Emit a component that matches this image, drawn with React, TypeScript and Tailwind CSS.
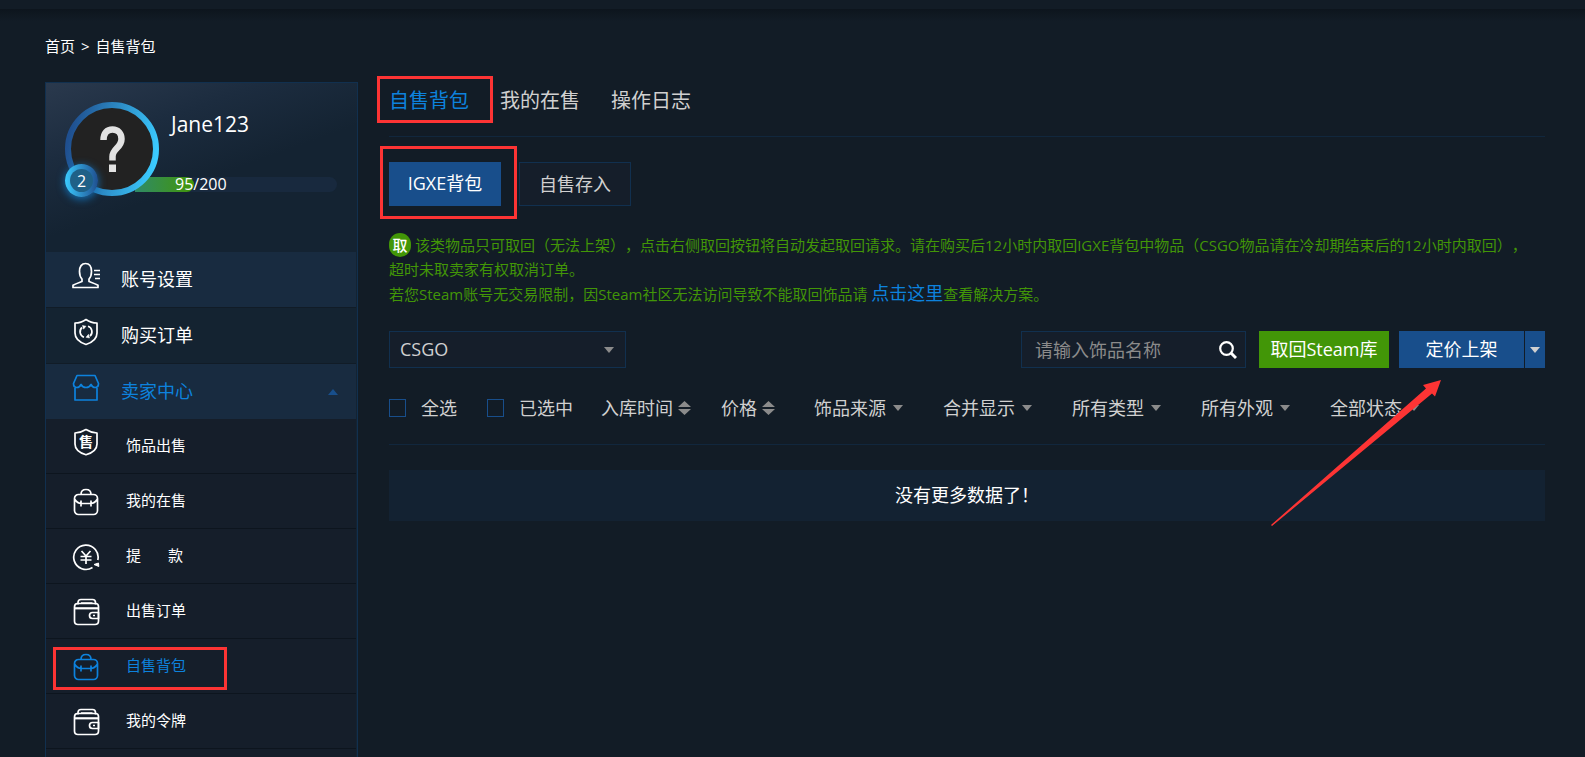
import React from "react";

const sideMenu = [
  { id: 1, name: "账号设置", icon: "user", box: "h-14 border-b bg-[#182b40]" },
  { id: 2, name: "购买订单", icon: "order", box: "h-14 border-b bg-[#142331]" },
  { id: 3, name: "卖家中心", icon: "shop", box: "h-[55px] bg-[#182b40]", active: true },
];

const sellerMenu = [
  { id: 1, name: "饰品出售", icon: "sell" },
  { id: 2, name: "我的在售", icon: "bag" },
  { id: 3, name: "提款", icon: "yen", spread: true },
  { id: 4, name: "出售订单", icon: "wallet" },
  { id: 5, name: "自售背包", icon: "bag", active: true },
  { id: 6, name: "我的令牌", icon: "wallet" },
];

const filters = ["饰品来源", "合并显示", "所有类型", "所有外观", "全部状态"];

const MenuIcon = ({ name }: { name: string }) => (
  <svg
    className="h-7 w-7 shrink-0"
    viewBox="0 0 28 28"
    fill="none"
    stroke="currentColor"
    strokeWidth="1.7"
    strokeLinejoin="round"
    aria-hidden="true"
  >
    {name === "user" && (
      <path d="M1 25.500v-2.200c3-1.800 6.400-2.800 9-3.800v-2.500C8.300 15.300 7.500 12.500 7.500 9.500 7.500 4.500 9.700 1.500 13.500 1.500s6 3 6 8c0 3-.8 5.800-2.500 7.500v2.500c2.600 1 6 2 9 3.800v2.200zM22 8.500h6M22 12.500h6M23 16.500h5" />
    )}
    {name === "order" && (
      <>
        <path d="M14 1.500c3.500 2.500 7 3.500 11 3.500v10c0 6-5 9.500-11 11.500C8 24.500 3 21 3 15V5c4 0 7.500-1 11-3.500z" />
        <path d="M12 19.200a5.700 5.700 0 0 1-2-9.700M16 8.300a5.700 5.700 0 0 1 2 9.700" />
        <path d="M10.500 7.500l3.500.7-2.500 3zM17.500 20l-3.500-.7 2.500-3z" fill="currentColor" strokeWidth="0.5" />
      </>
    )}
    {name === "shop" && (
      <path d="M5 1.500h18l3.500 8c0 3-1.500 4-3.500 4s-3-1-4-3c-1 2-2.500 3-5 3s-4-1-5-3c-1 2-2 3-4 3s-3.500-1-3.500-4zM3 14v12h22V14" />
    )}
    {name === "sell" && (
      <>
        <path d="M14 1.500c3.500 2.300 7 3.200 11 3.500v11c0 5.500-5 9-11 10.800C8 25 3 21.500 3 16V5c4-.3 7.500-1.200 11-3.500z" />
        <text
          x="14"
          y="19"
          fontSize="14"
          fontWeight="700"
          textAnchor="middle"
          fill="currentColor"
          stroke="none"
        >
          售
        </text>
      </>
    )}
    {name === "bag" && (
      <path d="M9 6.500c0-3 1.500-5 5-5s5 2 5 5M6.500 6.500h15A4 4 0 0 1 25.500 10.500v12a4 4 0 0 1-4 4h-15a4 4 0 0 1-4-4v-12a4 4 0 0 1 4-4zM2.500 11c2 3 4 4.500 6.500 4.500h10c2.500 0 4.500-1.500 6.500-4.500M9 12.500v6M19 12.500v6" />
    )}
    {name === "yen" && (
      <>
        <path d="M20.500 24.500A12.200 12.200 0 1 1 25.800 17" />
        <path d="M22 21.500l4.500-1.500.3 3.500z" fill="currentColor" strokeWidth="1" />
        <path d="M9.500 8l4.500 5 4.500-5M8.500 13.500h11M8.500 17h11M14 13v8" />
      </>
    )}
    {name === "wallet" && (
      <>
        <path d="M5.500 5.500h18c2 0 3 1 3 3V23c0 2.500-1.500 3.500-3.500 3.500H6c-2.500 0-3.500-1.500-3.500-3.500V9c0-2 1-3.500 3-3.500z" />
        <path d="M3 10.300h23" strokeWidth="2.200" />
        <path d="M6 6.500V4.500c0-2 1-3 3-3h11.500c2 0 3 1 3 3v2M9 5h11.500M26.500 14.500h-6a3 3 0 0 0 0 6h6zM21 17.500h2" />
      </>
    )}
  </svg>
);

const Caret = ({ className = "" }: { className?: string }) => (
  <svg
    className={`h-[6px] w-[10px] shrink-0 ${className}`}
    viewBox="0 0 10 6"
    fill="currentColor"
    aria-hidden="true"
  >
    <path d="M0 0h10L5 6z" />
  </svg>
);

const SortIcon = () => (
  <svg
    className="h-[14px] w-[13px]"
    viewBox="0 0 13 14"
    fill="#8b8b8b"
    aria-hidden="true"
  >
    <path d="M0 6L6.500 0 13 6zM0 8h13L6.500 14z" />
  </svg>
);

const Profile = () => (
  <div className="flex h-[169px] bg-[linear-gradient(160deg,#2a394d_0%,#1c2c3f_28%,#142332_55%,#142332_100%)] pt-[19px] pr-5 pl-[19px]">
    <div className="relative z-10 h-[94px] w-[94px] shrink-0">
      <svg className="h-full w-full" viewBox="0 0 94 94" aria-hidden="true">
        <defs>
          <linearGradient id="ring" x1="0" x2="1" y1="0.4" y2="0.6">
            <stop offset="0" stopColor="#1f4f8f" />
            <stop offset="1" stopColor="#3bcbff" />
          </linearGradient>
        </defs>
        <circle cx="47" cy="47" r="44" fill="#222" stroke="url(#ring)" strokeWidth="6" />
        <path
          d="M38.500 38c0-7 3.500-10.500 9-10.500s9 4 9 9.500c0 4-2 6.500-4.500 9s-4.500 4.500-4.500 8.500v4"
          fill="none"
          stroke="#e2e2e2"
          strokeWidth="6.500"
        />
        <path d="M44 62.500h7V70h-7z" fill="#e2e2e2" />
      </svg>
      <span className="absolute bottom-[-1px] left-0 flex h-[33px] w-[33px] items-center justify-center rounded-full bg-[linear-gradient(90deg,#3bcbff,#1f4f8f)] text-base text-white shadow-[0_2px_8px_#1372b8]">
        <span className="flex h-[23px] w-[23px] items-center justify-center rounded-full bg-[#1f6187]">
          2
        </span>
      </span>
    </div>
    <div className="flex flex-1 flex-col">
      <p className="mt-2 pl-3 text-[21px] leading-7 text-white">Jane123</p>
      <div className="relative mt-[39px] -ml-6 h-[15px] rounded-r-full bg-[#18293e]">
        <div className="h-full w-[29%] rounded-r-full bg-[linear-gradient(90deg,#2f8a68,#429607)]"></div>
        <span className="absolute inset-0 flex items-center pb-0.5 pl-10 text-base text-white">
          95/200
        </span>
      </div>
    </div>
  </div>
);

const Sidebar = () => (
  <aside className="w-[313px] shrink-0 border border-b-0 border-[#11304f] bg-[#142332]">
    <Profile />
    <nav className="pr-px">
      {sideMenu.map((item) => (
        <a
          key={item.id}
          href="#"
          className={`flex items-center border-[#111c27] pr-[18px] pl-[26px] text-lg ${item.box} ${
            item.active ? "text-[#0d82dd]" : "text-white"
          }`}
        >
          <span className="mb-2">
            <MenuIcon name={item.icon} />
          </span>
          <span className="flex-1 pb-0.5 pl-[21px]">{item.name}</span>
          {item.active && <Caret className="rotate-180 text-[#184f8c]" />}
        </a>
      ))}
      {sellerMenu.map((item) => (
        <a
          key={item.id}
          href="#"
          className={`relative flex h-[55px] items-center border-b border-[#0d151e] bg-[#151e2a] pl-[26px] text-[15px] ${
            item.active ? "text-[#0d82dd]" : "text-white"
          }`}
        >
          <span className={item.icon === "sell" ? "mb-2" : "mt-0.5"}>
            <MenuIcon name={item.icon} />
          </span>
          {item.spread ? (
            <span className="ml-[26px] flex w-[57px] justify-between pb-0.5">
              <span>提</span>
              <span>款</span>
            </span>
          ) : (
            <span className="pb-0.5 pl-[26px]">{item.name}</span>
          )}
          {item.active && (
            <span className="absolute top-2 left-[7px] h-[43px] w-[174px] border-3 border-[#fd3434]"></span>
          )}
        </a>
      ))}
      <div className="h-[9px] bg-[#151e2a]"></div>
    </nav>
  </aside>
);

const Notice = () => (
  <div className="mt-[27px] text-[15px] leading-6 text-[#429607] [text-spacing-trim:space-all]">
    <p>
      <span className="mr-1 inline-flex h-6 w-[22px] items-center justify-center rounded-full bg-[#429607] align-top font-medium text-white">
        取
      </span>
      该类物品只可取回（无法上架），点击右侧取回按钮将自动发起取回请求。请在购买后12小时内取回IGXE背包中物品（CSGO物品请在冷却期结束后的12小时内取回），
      <br />
      超时未取卖家有权取消订单。
    </p>
    <p>
      若您Steam账号无交易限制，因Steam社区无法访问导致不能取回饰品请{" "}
      <a href="#" className="text-lg leading-6 text-[#0d82dd]">
        点击这里
      </a>
      查看解决方案。
    </p>
  </div>
);

const Toolbar = () => (
  <div className="relative mt-[25px] flex h-[37px] text-lg">
    <div className="relative w-[237px]">
      <select
        aria-label="游戏"
        className="h-full w-full appearance-none border border-[#11304f] bg-[#151e2a] pb-0.5 pl-[10px] text-[#d0d0d0]"
      >
        <option>CSGO</option>
      </select>
      <Caret className="pointer-events-none absolute top-4 right-3 text-[#8b8b8b]" />
    </div>
    <form className="ml-auto flex w-[225px] items-center border border-[#11304f] bg-[#151e2a] pr-2 pl-[13px]">
      <input
        aria-label="饰品名称"
        placeholder="请输入饰品名称"
        className="min-w-0 flex-1 bg-transparent text-white outline-none placeholder:text-[#8b8b8b]"
      />
      <button type="button" aria-label="搜索">
        <svg
          className="h-5 w-[18px]"
          viewBox="0 0 18 20"
          fill="none"
          stroke="white"
          aria-hidden="true"
        >
          <circle cx="7.500" cy="8.500" r="6.300" strokeWidth="2.200" />
          <path d="M12 13l5 5" strokeWidth="3" />
        </svg>
      </button>
    </form>
    <button className="ml-[13px] w-[130px] bg-[#429607] pb-0.5 text-white">
      取回Steam库
    </button>
    <button className="ml-[10px] w-[125px] bg-[#184e8b] pb-0.5 text-white">
      定价上架
    </button>
    <button
      aria-label="更多"
      className="ml-px flex w-5 items-center justify-center bg-[#184e8b] text-[#d0d0d0]"
    >
      <Caret />
    </button>
    <svg
      className="pointer-events-none absolute top-[49px] right-[104px] z-10 h-[146px] w-[170px]"
      viewBox="0 0 170 146"
      fill="#fd3434"
      aria-hidden="true"
    >
      <path d="M170 0l-18 5 3 3.500L0 145l1 1L161 13.500l3 3z" />
    </svg>
  </div>
);

const FilterBar = () => (
  <div className="mt-[22px] flex h-[55px] border-b border-[#11273d] text-lg leading-9 whitespace-nowrap text-[#d0d0d0]">
    <label className="flex h-9 items-center gap-[15px]">
      <input
        type="checkbox"
        className="h-[18px] w-[17px] appearance-none border border-[#184e8b]"
      />
      全选
    </label>
    <label className="ml-[30px] flex h-9 items-center gap-[15px]">
      <input
        type="checkbox"
        className="h-[18px] w-[17px] appearance-none border border-[#184e8b]"
      />
      已选中
    </label>
    <button className="ml-7 flex h-9 items-center gap-[5px]">
      入库时间
      <SortIcon />
    </button>
    <button className="ml-[30px] flex h-9 items-center gap-[5px]">
      价格
      <SortIcon />
    </button>
    <div className="ml-[39px] flex gap-10">
      {filters.map((name) => (
        <button key={name} className="flex h-9 items-center gap-[7px]">
          {name}
          <Caret className="text-[#8b8b8b]" />
        </button>
      ))}
    </div>
  </div>
);

const App = () => {
  return (
    <div className="min-h-screen overflow-hidden bg-[#121c26] font-['Open_Sans','Noto_Sans_CJK_SC',sans-serif]">
      <header className="h-[9px]"></header>
      <div className="h-3 bg-[linear-gradient(180deg,#0d151d,#121c26)]"></div>
      <div className="pr-10 pl-[45px]">
        <div className="mt-[13px] flex h-6 items-center gap-[6px] text-[15px] text-white">
          <a href="#">首页</a>
          <span>&gt;</span>
          <a href="#">自售背包</a>
        </div>
        <div className="mt-6 flex items-start gap-[31px]">
          <Sidebar />
          <main className="min-w-0 flex-1">
            <div className="flex h-[55px] gap-[31px] border-b border-[#11273d] text-xl leading-[38px] text-[#d0d0d0]">
              <button className="relative h-[38px] text-[#0d82dd]">
                自售背包
                <span className="absolute -top-[6px] -left-3 h-[47px] w-[116px] border-3 border-[#fd3434]"></span>
              </button>
              <button className="h-[38px]">我的在售</button>
              <button className="h-[38px]">操作日志</button>
            </div>
            <div className="mt-[25px] flex h-11 gap-[18px] text-lg">
              <button className="relative w-28 bg-[#184e8b] pb-0.5 text-white">
                IGXE背包
                <span className="absolute -top-4 -left-[9px] h-[73px] w-[137px] border-3 border-[#fd3434]"></span>
              </button>
              <button className="w-28 border border-[#11304f] bg-[#151e2a] text-[#d0d0d0]">
                自售存入
              </button>
            </div>
            <Notice />
            <Toolbar />
            <FilterBar />
            <div className="mt-[25px] bg-[#132232] py-3 text-center text-lg leading-[27px] text-white">
              没有更多数据了！
            </div>
          </main>
        </div>
      </div>
    </div>
  );
};

export default App;
